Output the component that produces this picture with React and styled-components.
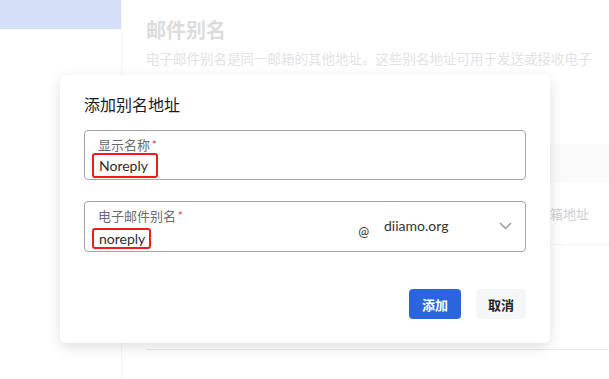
import styled, { createGlobalStyle } from "styled-components";

const GlobalStyle = createGlobalStyle`
  body {
    margin: 0;
    font-family: "Lato", "Noto Sans CJK SC", sans-serif;
    background: #fff;
  }
`;

const Page = styled.div`
  position: relative;
  width: 609px;
  height: 379px;
  display: flex;
  overflow: hidden;
`;

const Sidebar = styled.div`
  width: 121px;
  flex-shrink: 0;
  border-right: 1px solid #f5f5f6;
`;

const SideActive = styled.div`
  height: 29px;
  background: #d5dff7;
`;

const Main = styled.div`
  flex: 1;
  min-width: 0;
  padding: 16px 0 0 24px;
  overflow: hidden;
`;

const PageTitle = styled.div`
  font-size: 20px;
  line-height: 28px;
  font-weight: 700;
  color: #dcdcdc;
`;

const PageDesc = styled.div`
  margin-top: 5px;
  font-size: 13.5px;
  line-height: 20px;
  color: #e3e3e5;
  white-space: nowrap;
`;

const TableHead = styled.div`
  margin-top: 75px;
  height: 38px;
  background: #fafafb;
`;

const TableRow = styled.div`
  display: flex;
  align-items: center;
  height: ${(p) => p.$h}px;
  padding-left: ${(p) => p.$indent || 0}px;
  border-bottom: 1px ${(p) => p.$line} #ececee;
  font-size: 13px;
  color: #cfcfd3;
  white-space: nowrap;
`;

const Dialog = styled.div`
  position: absolute;
  left: 60px;
  top: 75px;
  width: 490px;
  height: 268px;
  box-sizing: border-box;
  padding: 18px 24px 24px;
  background: #fff;
  border-radius: 6px;
  box-shadow: 0 4px 14px rgba(0, 0, 0, 0.13);
  display: flex;
  flex-direction: column;
`;

const DialogTitle = styled.div`
  font-size: 16px;
  line-height: 24px;
  font-weight: 400;
  color: #1a1a1d;
`;

const Field = styled.div`
  display: flex;
  align-items: stretch;
  height: ${(p) => p.$h}px;
  margin-top: ${(p) => p.$mt}px;
  box-sizing: border-box;
  border: 1px solid #a4a4aa;
  border-radius: 4px;
`;

const FieldMain = styled.div`
  flex: 1;
  display: flex;
  flex-direction: column;
  padding: 5px 0 0 13px;
`;

const Label = styled.div`
  font-size: 13px;
  line-height: 18px;
  color: #6b6b70;
`;

const Star = styled.span`
  color: #e02f2f;
  font-size: 11px;
  vertical-align: top;
  margin-left: 2px;
`;

/* red highlight boxes drawn around the entered values */
const Value = styled.span`
  align-self: flex-start;
  margin: ${(p) => p.$mt}px 0 0 -6px;
  padding: ${(p) => p.$pv}px ${(p) => p.$pr}px ${(p) => p.$pv}px 5px;
  border: 2px solid #ee1c1c;
  border-radius: 3px;
  font-size: 14px;
  line-height: ${(p) => p.$lh}px;
  color: #2d2d30;
`;

const At = styled.div`
  display: flex;
  align-items: center;
  padding-top: 9px;
  font-size: 13px;
  color: #333;
`;

const Domain = styled.div`
  width: 141px;
  box-sizing: border-box;
  margin-left: 15px;
  display: flex;
  align-items: center;
  justify-content: space-between;
  padding: 0 13px 2px 0;
  font-size: 14px;
  color: #333;
`;

const Footer = styled.div`
  margin-top: auto;
  display: flex;
  justify-content: flex-end;
  gap: 15px;
`;

const Button = styled.button`
  height: 30px;
  padding: 0 ${(p) => (p.$primary ? 13 : 12)}px;
  border: none;
  border-radius: 4px;
  background: ${(p) => (p.$primary ? "#2b65de" : "#f5f6f8")};
  color: ${(p) => (p.$primary ? "#fff" : "#222")};
  font-family: "Noto Sans CJK SC", sans-serif;
  font-size: 13px;
  font-weight: 700;
`;

const Chevron = () => (
  <svg width="13" height="8" viewBox="0 0 13 8" fill="none">
    <path d="M1 1l5.5 5.5L12 1" stroke="#9a9aa0" strokeWidth="1.5" />
  </svg>
);

export default function App() {
  return (
    <Page>
      <GlobalStyle />
      <Sidebar>
        <SideActive />
      </Sidebar>
      <Main>
        <PageTitle>邮件别名</PageTitle>
        <PageDesc>电子邮件别名是同一邮箱的其他地址。这些别名地址可用于发送或接收电子</PageDesc>
        <TableHead />
        <TableRow $h={62} $indent={365} $line="dotted">
          暂无邮箱地址
        </TableRow>
        <TableRow $h={104} $line="solid" />
      </Main>

      <Dialog>
        <DialogTitle>添加别名地址</DialogTitle>
        <Field $h={50} $mt={13}>
          <FieldMain>
            <Label>
              显示名称<Star>*</Star>
            </Label>
            <Value $mt={-1} $pv={1} $pr={8} $lh={19}>
              Noreply
            </Value>
          </FieldMain>
        </Field>
        <Field $h={51} $mt={21}>
          <FieldMain>
            <Label>
              电子邮件别名<Star>*</Star>
            </Label>
            <Value $mt={3} $pv={0} $pr={4} $lh={17}>
              noreply
            </Value>
          </FieldMain>
          <At>@</At>
          <Domain>
            <span>diiamo.org</span>
            <Chevron />
          </Domain>
        </Field>
        <Footer>
          <Button $primary>添加</Button>
          <Button>取消</Button>
        </Footer>
      </Dialog>
    </Page>
  );
}
